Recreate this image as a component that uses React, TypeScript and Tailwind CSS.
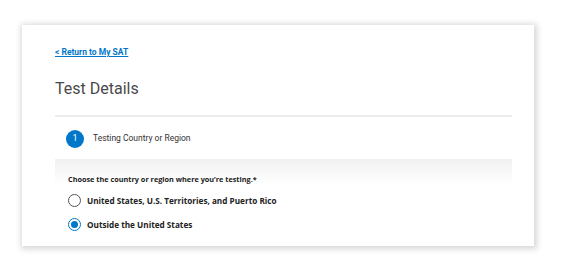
export default function App() {
  return (
    <div className="h-[271px] w-[566px] bg-white pl-[22px] pt-[25px]">
      <div className="flex h-[221px] w-[512px] flex-col bg-white px-[33px] pt-[22px] shadow-[1px_1px_6px_2px_rgba(0,0,0,0.16)]">
        <a
          href="#"
          className="block text-[8.5px] font-bold leading-[10px] text-[#0077c8] underline font-['Roboto',sans-serif]"
        >
          &lt; Return to My SAT
        </a>
        <h1 className="mt-[22px] text-[16px] leading-[20px] text-[#4a4a4a] font-['Roboto',sans-serif]">
          Test Details
        </h1>
        <div className="mt-[16px] h-[2px] w-[457px] bg-[#ececec]" />
        <div className="flex h-[42px] items-center pl-[11px] pt-[1px] font-['Roboto',sans-serif]">
          <span className="flex h-[18px] w-[18px] items-center justify-center rounded-full bg-[#0077c8] text-[9px] text-white">
            1
          </span>
          <span className="ml-[9px] text-[8.5px] text-[#333]">Testing Country or Region</span>
        </div>
        <div className="w-[457px] bg-[linear-gradient(#f1f1f1,#ffffff_26px)] pl-[13px] pt-[15px] font-['Open_Sans',sans-serif]">
          <p className="text-[7.3px] font-bold leading-[10px] text-[#222]">
            Choose the country or region where you’re testing.*
          </p>
          <label className="mt-[10px] flex h-[13px] items-center">
            <span className="h-[13px] w-[13px] rounded-full border border-[#555] bg-white" />
            <span className="ml-[6px] text-[8.2px] font-bold leading-[13px] text-[#222]">
              United States, U.S. Territories, and Puerto Rico
            </span>
          </label>
          <label className="mt-[11px] flex h-[13px] items-center">
            <span className="flex h-[13px] w-[13px] items-center justify-center rounded-full border border-[#0077c8] bg-white">
              <span className="h-[7px] w-[7px] rounded-full bg-[#0077c8]" />
            </span>
            <span className="ml-[6px] text-[8.2px] font-bold leading-[13px] text-[#222]">
              Outside the United States
            </span>
          </label>
        </div>
      </div>
    </div>
  );
}
